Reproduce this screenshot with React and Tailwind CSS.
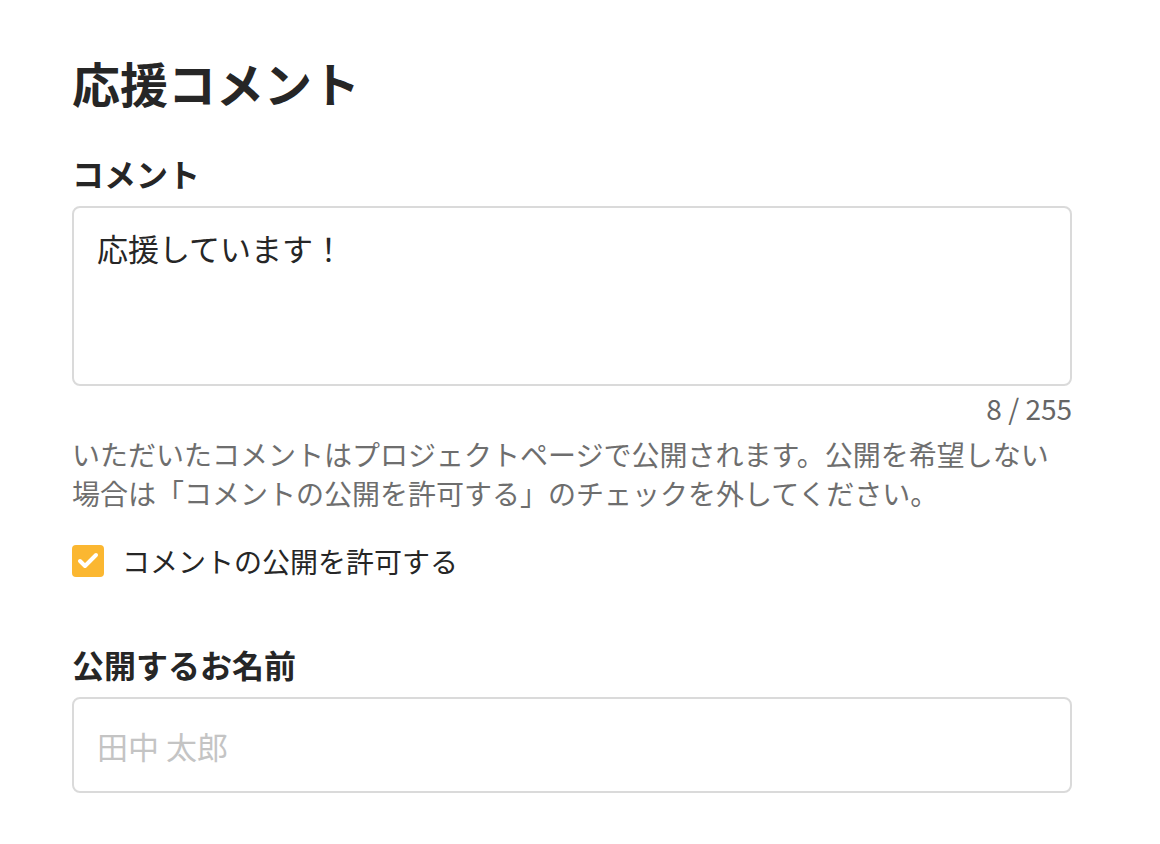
import { useState } from 'react';
import { Check } from 'lucide-react';

const font = { fontFamily: '"Noto Sans CJK JP", "Noto Sans", sans-serif' };

export default function App() {
  const [comment, setComment] = useState('応援しています！');
  const [allow, setAllow] = useState(true);
  const [name, setName] = useState('');

  return (
    <div className="min-h-screen bg-white" style={font}>
      <div className="w-[1000px] ml-[72px] pt-[58px] pb-10">
        <h1 className="text-[48px] font-bold leading-none text-[#262626]">応援コメント</h1>

        <section className="mt-[51px]">
          <label className="block text-[32px] font-bold leading-none text-[#262626]">コメント</label>
          <textarea
            value={comment}
            onChange={(e) => setComment(e.target.value)}
            className="mt-[17px] block w-full h-[180px] resize-none rounded-[8px] border-2 border-[#dadada] px-[23px] py-[16px] text-[31px] leading-[1.55] text-[#262626] outline-none"
          />
          <p className="mt-[8px] text-right text-[28px] leading-none text-[#666666]">
            {comment.length} / 255
          </p>
          <p className="mt-[13px] text-[28px] leading-[39px] text-[#6e6e6e]">
            いただいたコメントはプロジェクトページで公開されます。公開を希望しない場合は「コメントの公開を許可する」のチェックを外してください。
          </p>
          <label className="mt-[32px] flex items-center gap-[18px] cursor-pointer">
            <span
              onClick={() => setAllow(!allow)}
              className={allow
                ? 'flex h-[32px] w-[32px] items-center justify-center rounded-[4px] bg-[#fbb731]'
                : 'flex h-[32px] w-[32px] items-center justify-center rounded-[4px] border-2 border-[#dadada] bg-white'}
            >
              {allow && <Check size={24} strokeWidth={4} className="text-white" />}
            </span>
            <span className="text-[28px] leading-none text-[#262626]">コメントの公開を許可する</span>
          </label>
        </section>

        <section className="mt-[71px]">
          <label className="block text-[32px] font-bold leading-none text-[#262626]">公開するお名前</label>
          <input
            value={name}
            onChange={(e) => setName(e.target.value)}
            placeholder="田中 太郎"
            className="mt-[17px] block w-full h-[96px] rounded-[8px] border-2 border-[#dadada] px-[23px] text-[31px] text-[#262626] placeholder:text-[#c4c4c4] outline-none"
          />
        </section>
      </div>
    </div>
  );
}
